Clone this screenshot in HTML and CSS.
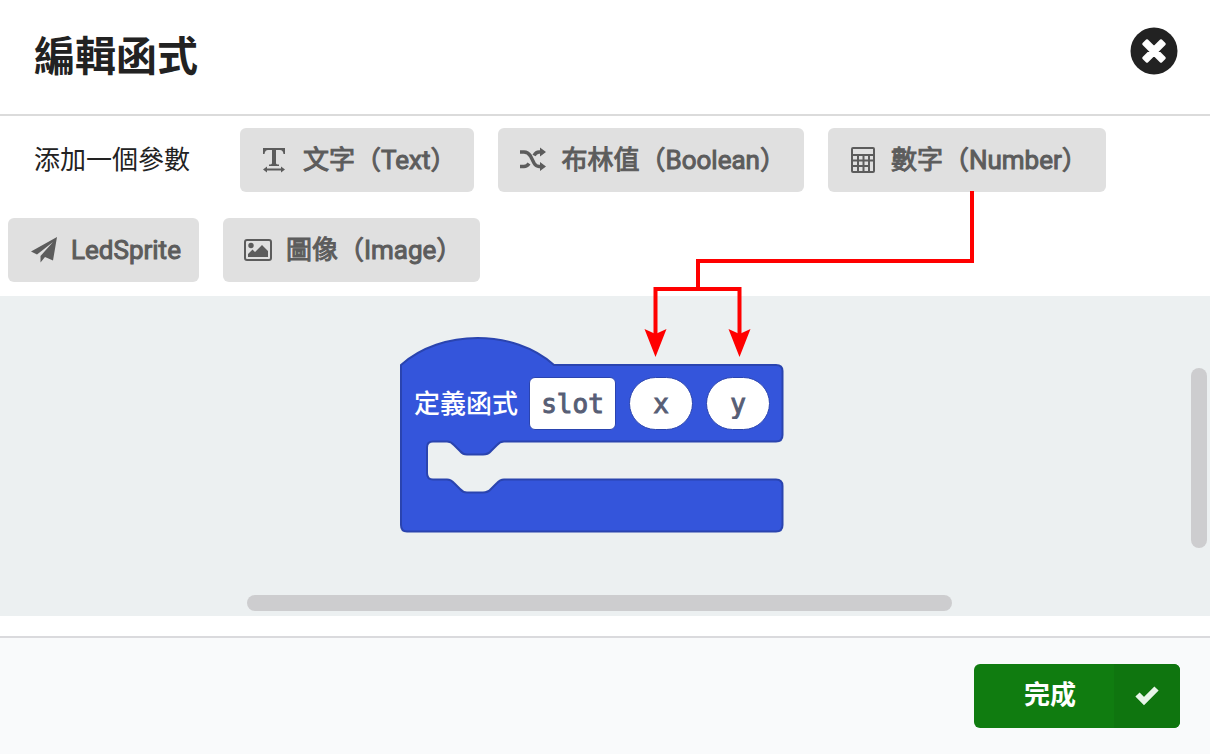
FILE: index.html
```
<!DOCTYPE html>
<html lang="zh-Hant">

<head>
  <meta charset="UTF-8" />
  <meta name="viewport" content="width=device-width, initial-scale=1.0" />
  <title>編輯函式</title>
  <link rel="stylesheet" href="styles.css">
</head>

<body>
  <header>
    <h1>編輯函式</h1>
    <button class="cerrar" type="button" aria-label="關閉">
      <svg viewBox="0 0 48 48">
        <circle cx="24" cy="24" r="23.5" fill="#222" />
        <path d="M17 13.500L24 20.500L31 13.500L34.500 17L27.500 24L34.500 31L31 34.500L24 27.500L17 34.500L13.500 31L20.500 24L13.500 17Z" fill="#fff" stroke="#fff" stroke-width="2.500" stroke-linejoin="round" />
      </svg>
    </button>
  </header>

  <main>
    <div class="parametros">
      <span class="etiqueta">添加一個參數</span>
      <button type="button">
        <svg viewBox="0 0 30 28">
          <path d="M3 2H25V8H23.500Q23 4 20 4H16V17Q16 18.500 19 18.500V20H9V18.500Q12 18.500 12 17V4H8Q5 4 4.500 8H3Z" />
          <path d="M3 23.500L7 20.500V22.500H21V20.500L25 23.500L21 26.500V24.500H7V26.500Z" />
        </svg>
        文字（Text）
      </button>
      <button type="button">
        <svg viewBox="0 0 30 28">
          <path d="M2 6H6Q10 6 12.500 10L16 17Q18 20.500 21 20.500H24M2 20.500H6Q9 20.500 11 17.500M16 9.500Q18 6 21 6H24" fill="none" stroke="currentColor" stroke-width="3.500" />
          <path d="M22 1.500L28 6L22 10.500ZM22 16L28 20.500L22 25Z" />
        </svg>
        布林值（Boolean）
      </button>
      <button type="button">
        <svg viewBox="0 0 30 28">
          <path fill-rule="evenodd" d="M5 1H25Q27 1 27 3V25Q27 27 25 27H5Q3 27 3 25V3Q3 1 5 1ZM5 3V8H25V3ZM5 10V13.500H9V10ZM11 10V13.500H14.500V10ZM16.500 10V13.500H20V10ZM22 10V13.500H25V10ZM5 15.500V19H9V15.500ZM11 15.500V19H14.500V15.500ZM16.500 15.500V19H20V15.500ZM22 15.500V25H25V15.500ZM5 21V25H9V21ZM11 21V25H14.500V21ZM16.500 21V25H20V21Z" />
        </svg>
        數字（Number）
      </button>
      <button type="button">
        <svg viewBox="0 0 30 28">
          <path d="M29 1L25 24.500L17 21L12.500 26.500V20L25 6L9 18.500L3 15.500Z" />
        </svg>
        LedSprite
      </button>
      <button type="button">
        <svg viewBox="0 0 30 28">
          <rect x="2" y="4" width="26" height="20" rx="2" fill="none" stroke="currentColor" stroke-width="2" />
          <circle cx="8" cy="9.500" r="2.700" />
          <path d="M5 21V18L9.500 13.500L12 16L19 9L25 15V21Z" />
        </svg>
        圖像（Image）
      </button>
    </div>

    <div class="lienzo">
      <div class="bloque">
        <svg class="forma" viewBox="0 0 384 196">
          <path d="M1 28C41 -8 114 -8 154 28H376Q382.500 28 382.500 34V98Q382.500 104.500 376 104.500H104Q100 104.500 97 108L91 114Q88 117.500 83 117.500H67Q63 117.500 60 114L54 108Q51 104.500 47 104.500H33Q27 104.500 27 110.500V136Q27 142.500 33 142.500H47Q51 142.500 54 146L60 152Q63 155.500 67 155.500H83Q88 155.500 91 152L97 146Q100 142.500 104 142.500H376Q382.500 142.500 382.500 149V188Q382.500 194.500 376 194.500H7Q1 194.500 1 188Z" />
        </svg>
        <div class="fila">
          <label for="nombre">定義函式</label>
          <input class="nombre" id="nombre" type="text" value="slot">
          <input class="arg" type="text" value="x" aria-label="x">
          <input class="arg" type="text" value="y" aria-label="y">
        </div>
      </div>
      <div class="barra barra-v"></div>
      <div class="barra barra-h"></div>
    </div>

    <svg class="flecha" viewBox="0 0 340 170">
      <path d="M332 0V70H58V98M15.500 145V98H99.500V145" fill="none" stroke="#f00" stroke-width="4" />
      <path d="M4.500 138L15.500 143L26.500 138L15.500 166ZM88.500 138L99.500 143L110.500 138L99.500 166Z" fill="#f00" />
    </svg>
  </main>

  <footer>
    <button class="hecho" type="button">
      <span class="texto">完成</span>
      <span class="icono">
        <svg viewBox="0 0 24 20">
          <path d="M2.500 8.500L9 15L21.500 2.500" fill="none" stroke="#e8f5e9" stroke-width="6" />
        </svg>
      </span>
    </button>
  </footer>
</body>

</html>
```

FILE: styles.css
```
* {
  box-sizing: border-box;
}

body {
  font-family: Roboto, "Noto Sans CJK TC", sans-serif;
  font-size: 26px;
  margin: 0;
  background-color: #fff;
  color: #222;
  display: flex;
  flex-direction: column;
  min-height: 100vh;
}

button {
  font-family: inherit;
  font-size: 26px;
  border: none;
  cursor: pointer;
}

header {
  display: flex;
  justify-content: space-between;
  align-items: center;
  padding: 26px 32px 26px 34px;
  border-bottom: 2px solid #dbdbdb;
}

header h1 {
  margin: 0;
  font-size: 41px;
  line-height: 62px;
  font-weight: bold;
}

.cerrar {
  width: 48px;
  height: 48px;
  padding: 0;
  margin-bottom: 12px;
  background: none;
}

.cerrar svg {
  display: block;
}

main {
  position: relative;
}

.parametros {
  display: flex;
  flex-wrap: wrap;
  align-items: center;
  gap: 26px 24px;
  padding: 12px 8px 14px;
}

.etiqueta {
  margin: 0 28px 0 26px;
  line-height: 64px;
  width: 154px;
  white-space: nowrap;
}

.parametros button {
  display: flex;
  align-items: center;
  gap: 13px;
  height: 64px;
  padding: 0 18px 0 20px;
  background-color: #e0e0e0;
  color: #5c5c5c;
  border-radius: 6px;
  line-height: 32px;
  white-space: nowrap;
  -webkit-text-stroke: 1px #5c5c5c;
}

.parametros svg {
  width: 30px;
  height: 28px;
  fill: currentColor;
}

.lienzo {
  position: relative;
  height: 320px;
  background-color: #ecf0f1;
  overflow: hidden;
}

.bloque {
  position: absolute;
  left: 400px;
  top: 41px;
  width: 384px;
  height: 196px;
}

.forma {
  position: absolute;
  left: 0;
  top: 0;
  width: 100%;
  height: 100%;
  fill: #3455db;
  stroke: #2a44af;
  stroke-width: 2px;
}

.fila {
  position: relative;
  display: flex;
  align-items: center;
  gap: 13px;
  padding: 40px 14px 0;
}

.fila label {
  width: 102px;
  color: #fff;
  font-weight: 500;
  line-height: 32px;
  white-space: nowrap;
}

.fila input {
  height: 53px;
  width: 64px;
  padding: 0;
  border: 1px solid #2a44af;
  background-color: #fff;
  color: #575e75;
  font-family: "DejaVu Sans Mono", monospace;
  font-size: 26px;
  text-align: center;
  -webkit-text-stroke: 1px #575e75;
}

.fila .nombre {
  width: 87px;
  border-radius: 6px;
}

.fila .arg {
  border-radius: 27px;
}

.barra {
  position: absolute;
  background-color: #cdcdcf;
  border-radius: 8px;
}

.barra-v {
  right: 3px;
  top: 72px;
  width: 16px;
  height: 180px;
}

.barra-h {
  left: 247px;
  right: 258px;
  bottom: 5px;
  height: 16px;
}

/* flecha del parámetro numérico hacia x e y */
.flecha {
  position: absolute;
  left: 640px;
  top: 75px;
  width: 340px;
  height: 170px;
  pointer-events: none;
}

footer {
  flex: 1;
  display: flex;
  justify-content: flex-end;
  align-items: flex-start;
  margin-top: 20px;
  padding: 26px 30px;
  background-color: #f9fafb;
  border-top: 2px solid #dadadd;
}

.hecho {
  display: flex;
  padding: 0;
  height: 64px;
  border-radius: 6px;
  overflow: hidden;
  background-color: #107c10;
  color: #fff;
  font-weight: bold;
  line-height: 62px;
}

.hecho .texto {
  width: 140px;
  padding-left: 12px;
}

.hecho .icono {
  display: flex;
  justify-content: center;
  align-items: center;
  width: 66px;
  height: 64px;
  background-color: #0f750f;
}

.hecho svg {
  width: 24px;
  height: 20px;
}
```
